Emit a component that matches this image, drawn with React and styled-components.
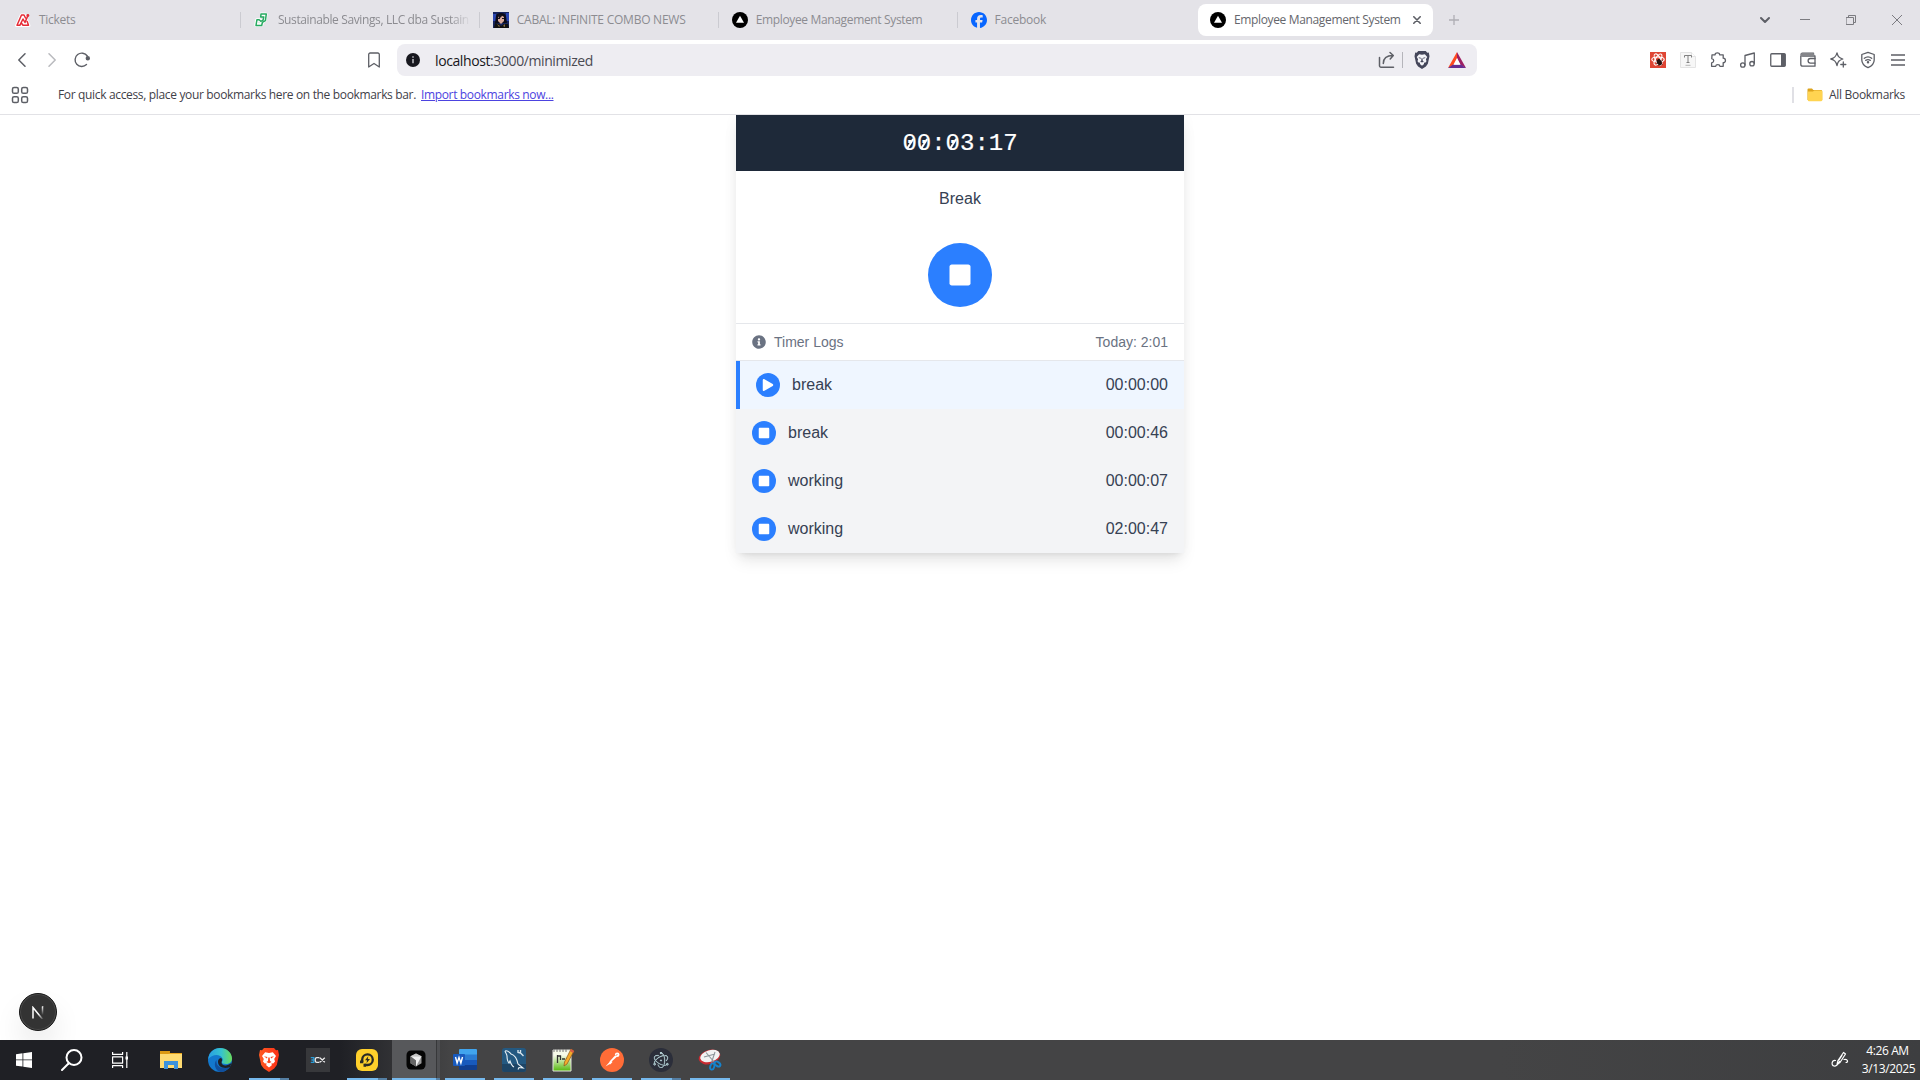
import React from 'react';
import styled, { createGlobalStyle, css } from 'styled-components';
import { FaStop, FaPlay, FaInfoCircle } from 'react-icons/fa';
import { SiElectron, SiFacebook } from 'react-icons/si';

const Global = createGlobalStyle`
  * { box-sizing: border-box; }
  body { margin: 0; background: #fff; overflow: hidden; }
  svg { display: block; flex: none; }
`;

const uiFont = css`font-family: "Open Sans", "Noto Sans", sans-serif;`;

const Screen = styled.div`
  width: 1920px;
  height: 1080px;
  display: flex;
  flex-direction: column;
  ${uiFont}
`;

/* ---------- browser chrome ---------- */
const TabStrip = styled.div`
  height: 40px;
  flex: none;
  display: flex;
  align-items: center;
  background: #e4e3e8;
  padding-left: 2px;
`;
const Tab = styled.div`
  width: 238.9px;
  height: 16px;
  display: flex;
  align-items: center;
  gap: 8px;
  padding: 0 11px 0 13px;
  border-right: 1px solid ${(p) => (p.$last ? 'transparent' : '#cbcbd1')};
  color: #8c8c91;
`;
const ActiveTab = styled.div`
  width: 235px;
  height: 32px;
  margin-left: 1.5px;
  display: flex;
  align-items: center;
  gap: 8px;
  padding: 0 12px;
  border-radius: 8px;
  background: #fff;
  color: #65666c;
`;
const TabTitle = styled.span`
  font-size: 12px;
  line-height: 16px;
  letter-spacing: ${(p) => p.$ls || 0}px;
  white-space: nowrap;
  ${(p) => p.$fade && css`
    mask-image: linear-gradient(to right, #000 90%, rgba(0, 0, 0, 0.1));
  `}
`;
const Favicon = styled.span`
  width: 16px;
  height: 16px;
  flex: none;
  display: grid;
  place-items: center;
`;
const CloseTab = styled.span`
  margin-left: auto;
`;
const NewTab = styled.span`
  margin-left: 16px;
`;
const WindowControls = styled.div`
  margin-left: auto;
  display: flex;
`;
const Control = styled.span`
  width: ${(p) => p.$w || 46}px;
  height: 40px;
  display: grid;
  place-items: center;
`;

const Toolbar = styled.div`
  height: 40px;
  flex: none;
  display: flex;
  align-items: center;
  padding: 0 7px;
  background: #fff;
`;
const ToolButton = styled.span`
  width: 30px;
  height: 30px;
  flex: none;
  display: grid;
  place-items: center;
`;
const BookmarkButton = styled(ToolButton)`
  margin-left: 262px;
`;
const AddressBar = styled.div`
  width: 1080px;
  height: 32px;
  margin-left: 8px;
  padding: 0 5px 0 9px;
  display: flex;
  align-items: center;
  border-radius: 8px;
  background: #eeedf2;
`;
const Url = styled.span`
  flex: 1;
  margin-left: 15px;
  font-size: 14px;
  letter-spacing: -0.4px;
  color: #4a4a52;
  b { font-weight: 400; color: #17171c; }
`;
const Divider = styled.span`
  width: ${(p) => p.$w || 1}px;
  height: 16px;
  background: ${(p) => p.$c || '#b5b5bb'};
`;
const Extensions = styled.div`
  margin-left: auto;
  display: flex;
`;
const BookmarksBar = styled.div`
  height: 35px;
  flex: none;
  display: flex;
  align-items: center;
  padding: 0 15px 5px 11px;
  border-bottom: 1px solid #e2e2e6;
  background: #fff;
  font-size: 12px;
  line-height: 16px;
  color: #3f4148;
`;
const Hint = styled.span`
  margin-left: 29px;
  width: 363px;
  white-space: nowrap;
  letter-spacing: -0.34px;
`;
const ImportLink = styled.a`
  color: #4c43e0;
  text-decoration: underline;
  white-space: nowrap;
  letter-spacing: -0.35px;
`;
const AllBookmarks = styled.div`
  margin-left: auto;
  display: flex;
  align-items: center;
  letter-spacing: -0.31px;
  svg { margin: 0 6px 0 13px; }
`;

/* ---------- page ---------- */
const Page = styled.main`
  flex: 1;
  position: relative;
  overflow: hidden;
  background: #fff;
  font-family: "Liberation Sans", Arial, sans-serif;
`;
const TimerCard = styled.section`
  width: 448px;
  margin: 0 auto;
  background: #fff;
  box-shadow: 0 10px 15px -3px rgba(0, 0, 0, 0.1), 0 4px 6px -4px rgba(0, 0, 0, 0.1), 0 0 16px rgba(0, 0, 0, 0.03);
`;
const Clock = styled.header`
  height: 56px;
  display: flex;
  justify-content: center;
  align-items: center;
  padding-top: 2px;
  background: #1e2939;
  color: #fff;
  font: 24px/32px "Liberation Mono", "Courier New", monospace;
  -webkit-text-stroke: 0.2px #fff;
`;
const Zero = styled.span`
  position: relative;
  &::after {
    content: '';
    position: absolute;
    left: 6.5px;
    top: 8px;
    width: 1.5px;
    height: 12px;
    background: #fff;
    transform: rotate(32deg);
  }
`;
const Current = styled.div`
  display: flex;
  flex-direction: column;
  align-items: center;
  gap: 32px;
  padding: 16px;
  color: #364153;
  font-size: 16px;
  line-height: 24px;
`;
const Round = styled.span`
  width: ${(p) => p.$size}px;
  height: ${(p) => p.$size}px;
  display: grid;
  place-items: center;
  border-radius: 50%;
  background: #2b7fff;
  color: #fff;
`;
const LogHeader = styled.div`
  display: flex;
  align-items: center;
  padding: 8px 16px;
  border-top: 1px solid #e5e7eb;
  border-bottom: 1px solid #e5e7eb;
  color: #6a7282;
  font-size: 14px;
  line-height: 20px;
  svg { margin-right: 8px; }
`;
const LogRow = styled.div`
  display: flex;
  align-items: center;
  gap: 12px;
  padding: 12px 16px;
  background: ${(p) => (p.$active ? '#eff6ff' : '#f3f4f6')};
  border-left: ${(p) => (p.$active ? '4px solid #2b7fff' : 'none')};
  color: #364153;
  font-size: 16px;
  line-height: 24px;
`;
const End = styled.span`
  margin-left: auto;
`;
const DevBadge = styled.div`
  position: absolute;
  left: 19px;
  bottom: 9px;
  width: 38px;
  height: 38px;
  display: grid;
  place-items: center;
  border-radius: 50%;
  background: #333;
  border: 1px solid #171717;
  box-shadow: inset 0 0 0 1px #4a4a4a, 0 16px 32px -8px rgba(0, 0, 0, 0.24);
`;

/* ---------- taskbar ---------- */
const Taskbar = styled.footer`
  height: 40px;
  flex: none;
  display: flex;
  align-items: stretch;
  background: linear-gradient(to right, #1f2025 0, #1f2025 340px, #444445 450px, #444445 1500px, #3d3e40 1920px);
`;
const SystemButton = styled.span`
  width: 48px;
  display: grid;
  place-items: center;
`;
const AppList = styled.div`
  display: flex;
  gap: 1px;
  margin-left: 3px;
`;
const AppButton = styled.span`
  width: 48px;
  display: grid;
  place-items: center;
  position: relative;
  background: ${(p) => (p.$current ? 'linear-gradient(to right, #57585b 44px, #37383a 44px, #37383a 45px, #4f5053 45px)' : 'none')};
  ${(p) => p.$running && css`
    &::after {
      content: '';
      position: absolute;
      bottom: 0;
      left: ${p.$current ? 0 : 4}px;
      right: ${p.$current ? 0 : 4}px;
      height: 2px;
      background: ${p.$many ? `linear-gradient(to right, #76b9ed calc(100% - ${p.$current ? 4 : 9}px), #557fa3 calc(100% - ${p.$current ? 4 : 9}px))` : '#76b9ed'};
    }
  `}
`;
const Tray = styled.div`
  margin-left: auto;
  display: flex;
  align-items: center;
  padding-right: 5px;
  gap: 13px;
`;
const DateTime = styled.div`
  width: 53px;
  color: #fff;
  font-size: 12px;
  line-height: 18px;
  letter-spacing: -0.38px;
  white-space: nowrap;
  display: flex;
  flex-direction: column;
  align-items: center;
`;
const Time = styled.span`
  padding-right: 2px;
`;

const Line = ({ size = 16, children, color = '#5d5f66', w = 1.3 }) => (
  <svg width={size} height={size} viewBox={`0 0 ${size} ${size}`} fill="none" stroke={color} strokeWidth={w} strokeLinecap="round" strokeLinejoin="round">{children}</svg>
);

const VercelMark = () => (
  <svg width="16" height="16" viewBox="0 0 16 16"><circle cx="8" cy="8" r="8" fill="#000" /><path d="M8 3.800 12 10.800H4z" fill="#fff" /></svg>
);
const TicketMark = () => (
  <svg width="16" height="16" viewBox="0 0 16 16" fill="none" strokeLinejoin="round" strokeLinecap="round">
    <path d="M1.500 13.500 6.300 3h3L14 13.500z" fill="#fff" stroke="#fff" strokeWidth="3" />
    <path d="M5 13.300H2L6.500 3H9L10.500 6M4.800 13.300 8 7l2 3.500L12.700 4M6.500 11.300l1.500 2h5.500L12.200 9.500" stroke="#e62b36" strokeWidth="1.500" />
    <circle cx="12.900" cy="3.500" r="1.400" fill="#e62b36" />
  </svg>
);
const SavingsMark = () => (
  <svg width="16" height="16" viewBox="0 0 16 16" fill="none" strokeLinejoin="round">
    <path d="M6.200 2.200h5.600l-.9 6.200-2.700 1.800L7.600 13H2l.9-5h2.800l1.600 1.100" stroke="#fff" strokeWidth="3.500" />
    <path d="M7 2h5.300l-.9 6.600-3 1.700L7.700 13.500H2l.9-5.700h2.300l1.600 1.500 2.300-1.200.7-3.200H6.700z" stroke="#27aa61" strokeWidth="1.500" />
  </svg>
);
const CabalMark = () => (
  <svg width="16" height="16" viewBox="0 0 16 16">
    <path fill="#16245c" d="M0 0h16v16H0z" /><path fill="#2a45b0" d="M0 2h3v7H0zm13-1h3v8h-3z" />
    <path fill="#0b0b18" d="M3 4C4 0 12 0 13 4l1 7H2z" /><path fill="#d9a99b" d="M5 5l3-2 3 2v4l-3 3-3-3z" />
    <path fill="#17131c" d="M5 2l5 1-4 4zm0 4h2v1H5zm4 0h2v1H9z" /><path fill="#111" d="M1 16l1-5 4 1 2 2 3-2 4 0 1 4z" /><path fill="#8a7144" d="M4 12l3 2-1 1zm8 0-2 2 2 1z" />
  </svg>
);
const ShareIcon = () => <Line size={18} w={1.500}><path d="M1.500 6.500v8.200a1.500 1.500 0 0 0 1.500 1.500h12.500M5.300 12.500c0-5 3.200-8 9.700-8M12 1.500l3.300 3L12.200 8" /></Line>;
const BatIcon = () => (
  <svg width="18" height="16" viewBox="0 0 18 16">
    <path d="M9 0 0 16l6-3.300L9 7z" fill="#ff4a20" /><path d="M9 0l9 16-6-3.300L9 6z" fill="#9e1f63" /><path d="M0 16h18l-5-3.400H5z" fill="#662d91" /><path d="M9 6l3.600 6.800H5.400z" fill="#fff" />
  </svg>
);
const Lion = ({ width, height, shell, face }) => (
  <svg width={width} height={height} viewBox="0 0 20 24">
    <defs><linearGradient id="lion" x1="0" x2="1"><stop stopColor="#ff5b22" /><stop offset="1" stopColor="#fb2f17" /></linearGradient></defs>
    <path d="M5 0h10l2 2.200 2-.2 1 5-2.200 10-2.600 3.500L10 24l-5.200-3.500L2.200 17 0 7l1-5 2 .2z" fill={shell} />
    <path d="M6.200 4.300l3.800.6 3.800-.6L17 8l-1.800 3 .8 2.600-1.800 1.900-1.700-.3.300 2L10 19.500l-2.800-2.300.3-2-1.700.3L4 13.600l.8-2.600L3 8z" fill={face} />
    <path d="M5 8.300l3.500.6-.7 1.600zM15 8.300l-3.500.6.7 1.600zM9.300 9.500h1.400l.3 3.500 1.500 1L10 15.300 7.500 14l1.500-1z" fill={shell} />
  </svg>
);
const FolderIcon = () => (
  <svg width="16" height="14" viewBox="0 0 16 14">
    <path d="M.5 1.500Q.5.500 1.500.500H5l1.300 1.400H14q1.200 0 1.200 1V12H.5z" fill="#dca31c" /><path d="M.8 3.600H6L7.200 2.600h7Q15.400 2.600 15.400 4v7.800q0 1.400-1.200 1.400H2Q.8 13.200.8 12z" fill="#ffd451" />
  </svg>
);

const extensions = [
  <svg width="16" height="16" viewBox="0 0 16 16"><path fill="#df4634" d="M0 0h16v16H0z" /><g fill="none" stroke="#fff" strokeWidth="1.100"><ellipse cx="8" cy="7.500" rx="6.200" ry="2.500" /><ellipse cx="8" cy="7.500" rx="6.200" ry="2.500" transform="rotate(60 8 7.500)" /><ellipse cx="8" cy="7.500" rx="6.200" ry="2.500" transform="rotate(120 8 7.500)" /></g><ellipse cx="9.300" cy="10.200" rx="2.300" ry="3.200" fill="#25110f" transform="rotate(-30 9.300 10.200)" /><path d="M6.500 8l6 4.500M6.500 12l6-3.500M9 7v7" stroke="#25110f" strokeWidth=".8" /></svg>,
  <svg width="16" height="16" viewBox="0 0 16 16"><path d="M.5.500h11l4 4v11H.5z" fill="#f7f7f7" stroke="#e4e4e4" /><path d="M11.500.500v4h4" fill="#fff" stroke="#e4e4e4" /><path d="M4.500 5.500V3.500h7v2M8 3.500v7M6.500 10.500h3" fill="none" stroke="#808080" /><path d="M5.500 13.300h5" stroke="#b5b5b5" /></svg>,
  <Line size={18}><path d="M3 3.800h3.100C6 1.200 10.700 1.200 10.600 3.800h3.600v3.400c3 .1 3 4.400 0 4.400v3.700h-3.300c-.2-2.300-4-2.300-4.200 0H2.600v-3.500c2.800-.3 2.800-3.700.2-4.100z" /></Line>,
  <Line size={18}><path d="M6 14V4.500L15.300 2v10.600" /><circle cx="3.800" cy="14" r="2.200" /><circle cx="13" cy="12.700" r="2.200" /></Line>,
  <svg width="16" height="14" viewBox="0 0 16 14"><rect x=".75" y=".75" width="14.500" height="12.500" rx="1" fill="none" stroke="#5d5f66" strokeWidth="1.300" /><path d="M11 1h4.300v12H11z" fill="#5d5f66" /></svg>,
  <Line size={18}><path d="M1.800 5v8.200a2 2 0 0 0 2 2H16V5H3.500a1.400 1.400 0 0 1 0-2.900h11V5" /><path d="M2.500 3h12v1.600h-12z" fill="#85868b" stroke="#85868b" /><path d="M16 7.500h-4.600a2.300 2.300 0 0 0 0 4.600H16" /></Line>,
  <Line size={18}><path d="M8 1.800c1 3.900 2 5 5.800 6.200-2 .7-3.200 1.300-4 2.200-.8 1-1.300 2-1.800 4.400-1-4.300-2.400-5.600-6.200-6.600C5.700 6.900 7 5.700 8 1.800Z" /><path d="M14.300 11v5M11.800 13.500h5" /></Line>,
  <Line size={18}><path d="M9 1.300 15.200 3.500V9c0 3.600-2.500 6-6.200 7.700C5.300 15 2.800 12.600 2.800 9V3.500zM5.300 7.300c2.200-1.700 5.200-1.700 7.400 0M6.700 9.400c1.400-1 3.200-1 4.600 0" /><circle cx="9" cy="11.300" r=".6" fill="#5d5f66" /></Line>,
  <Line size={18}><path d="M2 4h14M2 9h14M2 14h14" strokeLinecap="butt" /></Line>,
];

const taskApps = [
  { icon: (
    <svg width="22" height="20" viewBox="0 0 22 20"><path d="M0 1h8l2 2h12v15H0z" fill="#e9a51f" /><path d="M0 4h22v14H0z" fill="#fedb72" /><path d="M0 4h8l2-1.500V1H0z" fill="#dc9a12" /><path d="M4 19v-8h14v8h-4v-4H8v4z" fill="#3c92dc" /></svg>) },
  { icon: (
    <svg width="24" height="24" viewBox="0 0 24 24"><defs><linearGradient id="edgeTop" x1="0" x2="1"><stop stopColor="#289ee3" /><stop offset=".55" stopColor="#36c3cf" /><stop offset="1" stopColor="#6bdd5a" /></linearGradient></defs><circle cx="12" cy="12" r="12" fill="#1378cd" /><path d="M.3 11C1 4 6 0 12 0c7 0 12 5 12 10.500 0 4-3 5.500-6 5.500-3 0-4.500-1-4-2.300 1-1.200 1-2.200.5-3.200C12.500 6 5 5.500.3 11z" fill="url(#edgeTop)" /><path d="M8.500 12c-1 7 6 10 13.500 6.500C20 22 16 24 12.500 24 6.500 22.500 5.500 15 8.500 12z" fill="#104f9d" /><path d="M13.500 14c-.3 3.500 5 5 10 1L22 19c-6 2.500-12.500 0-12-6 .3-2 2-3 3-3 1.500 1 1.200 2.500.5 4z" fill="#1f2025" /></svg>) },
  { running: true, many: true, icon: <Lion width={20} height={24} shell="url(#lion)" face="#fff" /> },
  { icon: (
    <svg width="24" height="24" viewBox="0 0 24 24"><path fill="#37383b" d="M0 0h24v24H0z" /><g fill="none" strokeWidth="1.300"><path d="M4.800 9.700h3v4.600h-3M5.400 12h2.200" stroke="#2a9bd6" /><path d="M13.400 9.700h-2.600q-1.600 0-1.600 2.300t1.600 2.300h2.600M13.800 9.700l5 4.600M18.800 9.700l-5 4.600" stroke="#e8e8e8" /></g></svg>) },
  { running: true, many: true, icon: (
    <svg width="24" height="24" viewBox="0 0 24 24"><rect x="1" y="1" width="22" height="22" rx="6" fill="#ffd02b" /><path d="M7.200 14V11.500a5.300 5.300 0 1 1 5.300 5.500H9.500" fill="none" stroke="#2b2a25" strokeWidth="2.300" /><path d="M5 12.500h3.300v2.800H5zM8.500 15.800h2.500v3H8.500z" fill="#2b2a25" /><path d="M13.300 8.300l-3.300 4h2L11.500 15.300l3.500-4.200h-2.200z" fill="#2b2a25" /></svg>) },
  { running: true, many: true, current: true, icon: (
    <svg width="20" height="20" viewBox="0 0 20 20"><rect x=".5" y=".5" width="19" height="19" rx="4.500" fill="#050505" /><path d="M10 3.500l5.500 2.800v7L10 16.500l-5.500-3.200v-7z" fill="#999" /><path d="M4.500 6.300h11L10 16.500v-6z" fill="#efefef" /><path d="M4.500 6.300l5.500 4.200v6l-5.500-3.200z" fill="#666" /><path d="M10 3.500l5.500 2.800h-11z" fill="#c4c4c4" /></svg>) },
  { running: true, icon: (
    <svg width="24" height="22" viewBox="0 0 24 22"><path fill="#41a5ee" d="M6 1q0-1 1-1h16q1 0 1 1v5H6z" /><path fill="#2b7cd3" d="M6 5.500h18V11H6z" /><path fill="#185abd" d="M6 11h18v5.500H6z" /><path fill="#103f91" d="M6 16h18v4q0 1-1 1H7q-1 0-1-1z" /><rect y="5" width="12" height="12" rx="1" fill="#185abd" /><path d="M2.500 8l1.600 6L6 8.500 7.900 14l1.600-6" fill="none" stroke="#fff" strokeWidth="1.400" /></svg>) },
  { running: true, icon: (
    <svg width="24" height="24" viewBox="0 0 24 24"><rect width="24" height="24" rx="2.500" fill="#245981" /><path d="M0 16h24v5q0 3-3 3H3q-3 0-3-3z" fill="#1d4566" /><path d="M3 3c3-1 4 1 6 3 4 1 6 5 7 10l5 4-4-.5-1 2M3 3c.500 2 2 3 2 5 0 3 0 5 2 7l1-2c1 3 2 5 4 6" fill="none" stroke="#e9f1f5" strokeWidth="1.100" /><path d="M16 2v2.500l2.500.5 3 3M18.500 2v3" fill="none" stroke="#d4e2ea" strokeWidth="1.400" /></svg>) },
  { running: true, icon: (
    <svg width="24" height="24" viewBox="0 0 24 24"><defs><linearGradient id="pad" x1="0" y1="0" x2="0" y2="1"><stop offset=".25" stopColor="#f7fbe9" /><stop offset="1" stopColor="#54b80c" /></linearGradient></defs><path d="M2 2h18v21H2z" fill="url(#pad)" stroke="#e4e4df" /><path d="M3 1v3M6 1v3M9 1v3M12 1v3M15 1v3" stroke="#777" /><path d="M6.500 7v8M6.500 8h3v4M11 11h3M15 11h3" fill="none" stroke="#333" strokeWidth="1.300" /><path d="M20 1l3 2-7 13-3 2 .5-4z" fill="#f4ab2b" stroke="#8e5418" strokeWidth=".7" /><path d="M20 1l3 2-1 2-3-2z" fill="#d65a49" /></svg>) },
  { running: true, icon: (
    <svg width="24" height="24" viewBox="0 0 24 24"><circle cx="12" cy="12" r="12" fill="#ff6c37" /><path d="M9.500 13.500l6-6.500 1.700 1.600-6.700 6z" fill="#fff" /><circle cx="17.200" cy="6.800" r="2.300" fill="#fff" /><path d="M5.500 18.500l4.500-5 1.500 1.500zM9 16l2.500-3 1 1-2 2.300z" fill="#fff" /><path d="M15.500 7.500l2-1" stroke="#ff6c37" strokeWidth=".8" /></svg>) },
  { running: true, many: true, icon: (
    <svg width="24" height="24" viewBox="0 0 24 24"><circle cx="12" cy="12" r="12" fill="#2b2e3a" /><g transform="translate(4 4)"><SiElectron size={16} color="#d2f2f7" stroke="#d2f2f7" strokeWidth=".5" /></g></svg>) },
  { running: true, icon: (
    <svg width="24" height="24" viewBox="0 0 24 24"><ellipse cx="11.500" cy="9" rx="11" ry="7" transform="rotate(-16 11.500 9)" fill="#c92b31" /><ellipse cx="12" cy="8" rx="10" ry="5.800" transform="rotate(-16 12 8)" fill="#f2f2f2" /><path d="M8 4.500l8.500 10M17 4l-3.500 10.500M6 9l11-3" stroke="#8d9499" strokeWidth="1.100" /><g fill="none" stroke="#1683cd" strokeWidth="1.900"><ellipse cx="14.300" cy="18.500" rx="2" ry="3.200" transform="rotate(18 14.300 18.500)" /><ellipse cx="19.500" cy="16" rx="3.200" ry="2" transform="rotate(35 19.500 16)" /></g></svg>) },
];

const tabs = [
  { title: 'Tickets', icon: <TicketMark />, ls: -0.3 },
  { title: 'Sustainable Savings, LLC dba Sustain', icon: <SavingsMark />, fade: true, ls: -0.38 },
  { title: 'CABAL: INFINITE COMBO NEWS', icon: <CabalMark />, ls: -0.24 },
  { title: 'Employee Management System', icon: <VercelMark />, ls: -0.35 },
  { title: 'Facebook', icon: <SiFacebook size={16} color="#0866ff" />, ls: -0.25 },
];

const clock = '00:03:17';

const logs = [
  { name: 'break', time: '00:00:00', active: true },
  { name: 'break', time: '00:00:46' },
  { name: 'working', time: '00:00:07' },
  { name: 'working', time: '02:00:47' },
];

export default function App() {
  return (
    <Screen>
      <Global />
      <TabStrip>
        {tabs.map((t, i) => (
          <Tab key={t.title} $last={i === tabs.length - 1}>
            <Favicon>{t.icon}</Favicon>
            <TabTitle $fade={t.fade} $ls={t.ls}>{t.title}</TabTitle>
          </Tab>
        ))}
        <ActiveTab>
          <Favicon><VercelMark /></Favicon>
          <TabTitle $ls={-0.35}>Employee Management System</TabTitle>
          <CloseTab><Line size={8} w={1.600}><path d="M.8.800l6.400 6.400M7.200.800.800 7.200" /></Line></CloseTab>
        </ActiveTab>
        <NewTab><Line size={10} color="#aeaeb4" w={1.300}><path d="M5 0v10M0 5h10" strokeLinecap="butt" /></Line></NewTab>
        <WindowControls>
          <Control $w={34}><Line size={10} w={2}><path d="M1 3l4 4 4-4" /></Line></Control>
          <Control><Line size={10} color="#7b7b80" w={1}><path d="M0 4.500h10" strokeLinecap="butt" /></Line></Control>
          <Control><Line size={10} color="#7b7b80" w={1}><path d="M.5 2.500h7v7h-7zM2.500 2.500v-2h7v7h-2" /></Line></Control>
          <Control><Line size={10} color="#7b7b80" w={1}><path d="M0 0l10 10M10 0 0 10" /></Line></Control>
        </WindowControls>
      </TabStrip>

      <Toolbar>
        <ToolButton><Line size={14} w={1.500}><path d="M10 .8 3.800 7l6.200 6.200" /></Line></ToolButton>
        <ToolButton><Line size={14} color="#b9babe" w={1.500}><path d="M4 .8 10.200 7 4 13.200" /></Line></ToolButton>
        <ToolButton><Line size={16} w={1.400}><path d="M12.500 12.600A6.700 6.700 0 1 1 13.300 4" /><circle cx="13.800" cy="6.300" r="1.500" fill="#5d5f66" /></Line></ToolButton>
        <BookmarkButton><Line size={16}><path d="M2.700 15V2.500a1.500 1.500 0 0 1 1.500-1.500h7.600a1.500 1.500 0 0 1 1.500 1.500V15L8 11.500z" /></Line></BookmarkButton>
        <AddressBar>
          <svg width="14" height="14" viewBox="0 0 14 14"><circle cx="7" cy="7" r="7" fill="#17171e" /><path d="M7 6v4.200M7 3.200v1.500" stroke="#d9d9df" strokeWidth="1.300" /></svg>
          <Url><b>localhost</b>:3000/minimized</Url>
          <ToolButton><ShareIcon /></ToolButton>
          <Divider />
          <Control $w={38}><Lion width={16} height={18} shell="#44465a" face="#f4f4f8" /></Control>
          <Control $w={31}><BatIcon /></Control>
        </AddressBar>
        <Extensions>
          {extensions.map((icon, i) => <ToolButton key={i}>{icon}</ToolButton>)}
        </Extensions>
      </Toolbar>

      <BookmarksBar>
        <Line size={18} w={1.500}><rect x="1.500" y="1.500" width="5.800" height="5.800" rx="1.600" /><rect x="10.700" y="1.500" width="5.800" height="5.800" rx="1.600" /><rect x="1.500" y="10.700" width="5.800" height="5.800" rx="1.600" /><rect x="10.700" y="10.700" width="5.800" height="5.800" rx="1.600" /></Line>
        <Hint>For quick access, place your bookmarks here on the bookmarks bar.</Hint>
        <ImportLink>Import bookmarks now...</ImportLink>
        <AllBookmarks>
          <Divider $w={2} $c="#e0e0e5" />
          <FolderIcon />
          All Bookmarks
        </AllBookmarks>
      </BookmarksBar>

      <Page>
        <TimerCard>
          <Clock>
            <span>{clock.split('').map((c, i) => (c === '0' ? <Zero key={i}>0</Zero> : c))}</span>
          </Clock>
          <Current>
            <span>Break</span>
            <Round $size={64}><FaStop size={24} /></Round>
          </Current>
          <LogHeader>
            <FaInfoCircle size={14} />
            Timer Logs
            <End>Today: 2:01</End>
          </LogHeader>
          {logs.map((l, i) => (
            <LogRow key={i} $active={l.active}>
              <Round $size={24}>{l.active ? <FaPlay size={12} /> : <FaStop size={12} />}</Round>
              {l.name}
              <End>{l.time}</End>
            </LogRow>
          ))}
        </TimerCard>
        <DevBadge>
          <svg width="12" height="13" viewBox="0 0 12 13" fill="none" strokeWidth="1.500">
            <defs>
              <linearGradient id="diag" gradientUnits="userSpaceOnUse" x1="1" y1="0" x2="11" y2="13"><stop offset=".6" stopColor="#fff" /><stop offset="1" stopColor="#fff" stopOpacity=".1" /></linearGradient>
              <linearGradient id="stem" gradientUnits="userSpaceOnUse" x1="0" y1="0" x2="0" y2="9"><stop stopColor="#fff" /><stop offset="1" stopColor="#fff" stopOpacity="0" /></linearGradient>
            </defs>
            <path d="M1 12.500V1.500L10.800 13.500" stroke="url(#diag)" /><path d="M10.500.500h.01v9" stroke="url(#stem)" />
          </svg>
        </DevBadge>
      </Page>

      <Taskbar>
        <SystemButton><svg width="16" height="16" viewBox="0 0 16 16" fill="#fff"><path d="M0 2.200 6.500 1.300v6.200H0zM7.300 1.200 16 0v7.500H7.300zM0 8.300h6.500v6.300L0 13.700zM7.300 8.300H16V16l-8.700-1.200z" /></svg></SystemButton>
        <SystemButton><Line size={22} color="#fff" w={2}><circle cx="13" cy="8.500" r="7.500" /><path d="M7.500 14.500 1 21" /></Line></SystemButton>
        <SystemButton><Line size={16} color="#fff" w={1.200}><path d="M.6 0v2.400h10V0M.6 4.800h10v6.400H.6zM.6 16v-2.400h10V16M14.800 0v16" strokeLinecap="butt" /><path d="M13.500 4.500H16v3h-2.500z" fill="#fff" stroke="none" /></Line></SystemButton>
        <AppList>
          {taskApps.map((a, i) => (
            <AppButton key={i} $running={a.running} $many={a.many} $current={a.current}>{a.icon}</AppButton>
          ))}
        </AppList>
        <Tray>
          <Line size={18} color="#fff" w={1.200}><path d="M6 13.500 7 9.500 12.500 1.500l2 1.500L9 11.500zM8 9 11 4.500M4.500 9.500C.5 9 0 14.500 3 15c3 .5 4-2 5.500-4.500M13 8.500c4-1 4.500 3 2 3" /></Line>
          <DateTime><Time>4:26 AM</Time><span>3/13/2025</span></DateTime>
        </Tray>
      </Taskbar>
    </Screen>
  );
}
